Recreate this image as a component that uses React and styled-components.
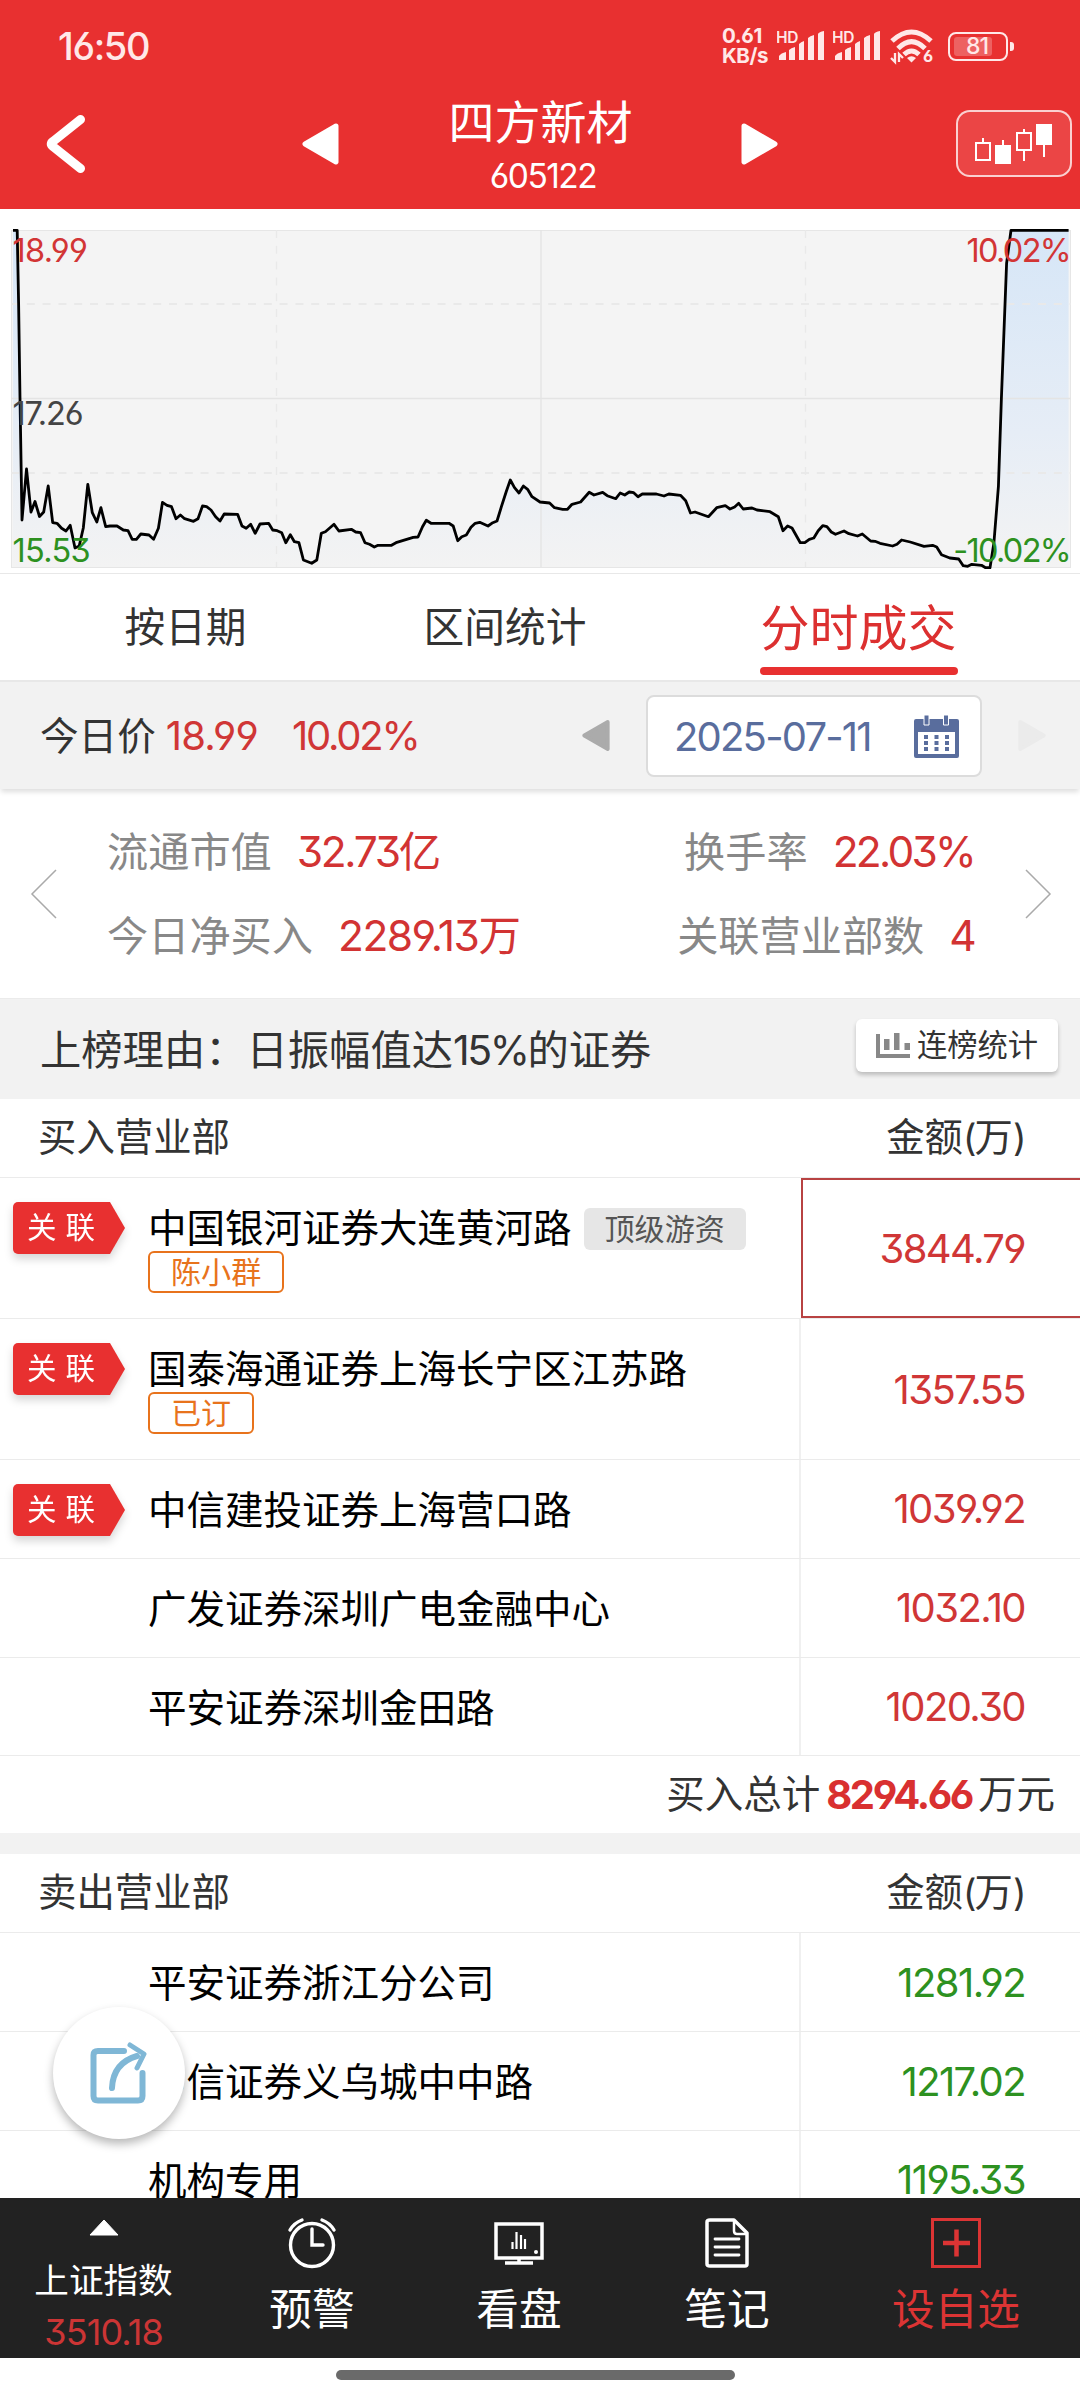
import styled, { createGlobalStyle, css } from "styled-components";

const GlobalStyle = createGlobalStyle`
  * {
    box-sizing: border-box;
  }

  body {
    margin: 0;
    background: #fff;
    font-family: "Inter", "Noto Sans CJK SC", sans-serif;
    font-feature-settings: "cv03", "cv04", "cv09";
  }

  svg {
    display: block;
    flex-shrink: 0;
  }
`;

const Page = styled.div`
  position: relative;
  display: flex;
  flex-direction: column;
  width: 1080px;
  height: 2400px;
  overflow: hidden;
  background: #fff;
  color: #333;
  white-space: nowrap;
`;

const Num = styled.span`
  letter-spacing: ${(props) => props.$spacing || "-0.04em"};
  font-size: ${(props) => props.$size || "40px"};
  font-weight: ${(props) => props.$weight || 400};
  color: ${(props) => props.$color || "inherit"};
`;

// 顶部
const Header = styled.header`
  height: 209px;
  background: #e83030;
  color: #fff;
`;

const StatusBar = styled.div`
  display: flex;
  align-items: center;
  height: 92px;
  padding: 0 66px 0 58px;
  color: #ffe8e8;
`;

const Clock = styled.div`
  flex: 1;
  font-size: 38px;
  font-weight: 500;
  letter-spacing: -0.035em;
`;

const NetSpeed = styled.div`
  width: 55px;
  font-size: 20.5px;
  line-height: 20px;
  font-weight: 700;
  letter-spacing: -0.02em;
`;

const SignalArea = styled.div`
  display: flex;
  width: 56px;
`;

const Wifi = styled.div`
  width: 59px;
`;

const Battery = styled.div`
  display: flex;
  align-items: center;
  gap: 2px;
`;

const BatteryBody = styled.div`
  display: flex;
  width: 60px;
  height: 29px;
  padding: 3px 4px;
  border: 2.5px solid #ffe8e8;
  border-radius: 8px;
`;

const BatteryFill = styled.div`
  display: flex;
  justify-content: center;
  width: 38px;
  padding-left: 8px;
  border-radius: 3px;
  background: rgba(255, 255, 255, 0.24);
  font-size: 23px;
  line-height: 18px;
  font-weight: 500;
  letter-spacing: -0.04em;
`;

const BatteryCap = styled.div`
  width: 4px;
  height: 9px;
  border-radius: 0 3px 3px 0;
  background: #ffe8e8;
`;

const TitleBar = styled.div`
  display: grid;
  grid-template-columns: 302px 103px 271px 280px 116px;
  align-items: center;
  height: 104px;
`;

const BackArea = styled.div`
  padding-left: 46px;
`;

const StockTitle = styled.div`
  display: flex;
  flex-direction: column;
  align-items: center;
`;

const StockName = styled.div`
  height: 62px;
  margin-top: -2px;
  font-size: 46px;
  line-height: 64px;
`;

const StockCode = styled.div`
  height: 44px;
  padding-left: 5px;
  font-size: 33.5px;
  line-height: 49px;
  letter-spacing: -0.045em;
`;

const NextArea = styled.div`
  padding-left: 65px;
`;

const KLineBtn = styled.div`
  display: flex;
  justify-content: center;
  align-items: center;
  height: 67px;
  margin-top: -1px;
  border: 2px solid rgba(255, 255, 255, 0.75);
  border-radius: 14px;
  background: #eb4545;
`;

// 分时图
const ChartArea = styled.div`
  height: 365px;
  padding-top: 1px;
  border-bottom: 1px solid #e8e8e8;
`;

const Tabs = styled.div`
  display: grid;
  grid-template-columns: 371px 268px 439px;
  height: 107px;
  border-bottom: 1px solid #e8e8e8;
`;

const Tab = styled.div`
  display: flex;
  justify-content: center;
  font-size: 40.7px;
  line-height: 108px;
`;

const ActiveTab = styled(Tab)`
  align-items: center;
  flex-direction: column;
  padding-top: 12px;
  color: #dc3030;
  font-size: 49px;
  line-height: 72px;
`;

const TabLine = styled.div`
  width: 198px;
  height: 8px;
  margin-top: 2px;
  border-radius: 4px;
  background: #e83030;
`;

const PriceBar = styled.div`
  position: relative;
  display: flex;
  align-items: center;
  height: 108px;
  padding-left: 40px;
  border-top: 1px solid #e8e8e8;
  background: #f2f2f2;
  box-shadow: 0 4px 5px -1px rgba(0, 0, 0, 0.13);
  font-size: 38.6px;
  line-height: 60px;
`;

const TodayPrice = styled.div`
  display: flex;
  width: 542px;
`;

const Price = styled(Num)`
  margin-left: 10px;
`;

const Rate = styled(Num)`
  margin-left: 34px;
`;

const DateBox = styled.div`
  display: flex;
  justify-content: space-between;
  align-items: center;
  width: 336px;
  height: 82px;
  margin: 0 36px;
  padding: 2px 21px 0 26px;
  border: 2px solid #dcdcdc;
  border-radius: 8px;
  background: #fff;
  color: #596d9d;
`;

const Summary = styled.div`
  display: flex;
  justify-content: space-between;
  align-items: center;
  height: 210px;
  padding: 0 26px 0 28px;
  border-bottom: 1px solid #ebebeb;
`;

const SummaryGrid = styled.div`
  display: grid;
  grid-template-columns: 1fr 1fr;
  flex: 1;
  padding: 1px 49px 0 48px;
  color: #888;
  font-size: 41.2px;
  line-height: 84px;
`;

const SummaryItem = styled.div`
  display: flex;
  justify-content: ${(props) => (props.$end ? "flex-end" : "flex-start")};
  gap: 25px;
`;

const SummaryValue = styled(Num)`
  font-size: 42.5px;
  color: #d23333;
`;

const ReasonBar = styled.div`
  display: flex;
  justify-content: space-between;
  align-items: center;
  height: 100px;
  padding: 0 22px 0 40px;
  background: #f2f2f2;
  font-size: 41.3px;
`;

const ReasonText = styled.div`
  margin-top: -5px;
`;

const StatBtn = styled.div`
  display: flex;
  justify-content: center;
  align-items: center;
  gap: 7px;
  width: 202px;
  height: 53px;
  margin-top: -8px;
  border-radius: 6px;
  background: #fff;
  box-shadow: 0 3px 4px rgba(0, 0, 0, 0.22);
  font-size: 30.3px;
  line-height: 47px;
`;

// 营业部列表
const TableHead = styled.div`
  display: flex;
  justify-content: space-between;
  height: 79px;
  padding: 0 55px 0 38px;
  border-bottom: 1px solid #ebebeb;
  font-size: 38.4px;
  line-height: 77px;
`;

const Row = styled.div`
  display: grid;
  grid-template-columns: 148px 651px 281px;
  height: ${(props) => (props.$tall ? "141px" : "98.8px")};
  border-bottom: 1px solid #ebebeb;
`;

const RelatedArea = styled.div`
  padding: 24px 0 0 13px;
  filter: drop-shadow(0 5px 4px rgba(0, 0, 0, 0.16));
`;

const RelatedBadge = styled.div`
  width: 112px;
  height: 52px;
  padding-left: 14px;
  border-radius: 5px 0 0 5px;
  background: #e83030;
  clip-path: polygon(0 0, 97px 0, 100% 50%, 97px 100%, 0 100%);
  color: #fff;
  font-size: 29.5px;
  line-height: 51px;
  letter-spacing: 9px;
`;

const DeptInfo = styled.div`
  display: flex;
  flex-direction: column;
  align-items: flex-start;
  padding-top: 29px;
`;

const DeptName = styled.div`
  display: flex;
  align-items: center;
  gap: 12px;
  height: 44px;
  color: #000;
  font-size: 38.5px;
  line-height: 42px;
`;

const NameText = styled.span`
  height: 44px;
`;

const tagStyle = css`
  height: 42px;
  border-radius: 6px;
  font-size: 30.1px;
`;

const GrayTag = styled.span`
  ${tagStyle}
  padding: 0 21px;
  background: #e6e6e6;
  color: #555;
  line-height: 42px;
`;

const OrangeTag = styled.span`
  ${tagStyle}
  padding: 0 21px;
  border: 2px solid #e8731c;
  color: #e8731c;
  line-height: 39px;
`;

const Amount = styled.div`
  display: flex;
  justify-content: flex-end;
  align-items: center;
  padding-right: 55px;
  border-left: 2px solid #f0f0f0;
  color: ${(props) => (props.$sell ? "#2d9120" : "#d03636")};

  ${(props) =>
    props.$selected &&
    css`
      margin: 0 0 0 2px;
      border: 2px solid #b84242;
      border-right: none;
    `}
`;

const TotalRow = styled.div`
  display: flex;
  justify-content: flex-end;
  gap: 6px;
  height: 77px;
  padding-right: 25px;
  font-size: 38.5px;
  line-height: 77px;
`;

const SectionGap = styled.div`
  height: 21px;
  background: #f2f2f2;
`;

const Content = styled.main`
  flex: 1;
  min-height: 0;
  overflow: hidden;
`;

const ShareBtn = styled.div`
  position: absolute;
  left: 53px;
  top: 2007px;
  display: flex;
  justify-content: center;
  align-items: center;
  width: 132px;
  height: 132px;
  border-radius: 50%;
  background: #fff;
  box-shadow: 0 5px 10px rgba(0, 0, 0, 0.28);
`;

// 底部导航
const BottomNav = styled.nav`
  display: grid;
  grid-template-columns: 208px 208px 206px 210px 248px;
  height: 160px;
  background: #222;
`;

const NavItem = styled.div`
  display: flex;
  flex-direction: column;
  align-items: center;
  padding-top: 19px;
  color: ${(props) => props.$color || "#fff"};
  font-size: 42.7px;
  line-height: 81px;
`;

const IndexItem = styled(NavItem)`
  padding: 21px 1px 0 0;
  line-height: 52px;
`;

const IndexName = styled.div`
  margin-top: 18px;
  font-size: 34.6px;
  line-height: 52px;
`;

const HomeArea = styled.div`
  display: flex;
  justify-content: center;
  height: 42px;
  padding-top: 12px;
`;

const HomeBar = styled.div`
  width: 399px;
  height: 10px;
  margin-right: 9px;
  border-radius: 5px;
  background: #6a6a6a;
`;

const linePoints =
  "13,20.3 17.2,20.3 18.6,93 20,188 22,310 26.5,259 31,302 35,291.5 39.5,306.5 43.7,302 48.2,276 52.7,312.7 57,313.3 61.6,318.3 66,321 70.2,315.3 75,338 79.2,336 83.3,318 87.8,274.3 92.3,302.7 96.8,312 100.9,297.7 105.7,316.7 110,316 117,316 123.3,320 128,320.7 132.2,329.3 136.4,329.3 140.8,324 149,325 153.6,329.3 158.4,318.3 162.5,292.3 167,295.3 171.5,296.7 176,308.7 180.4,305 184.6,308.7 193.5,311.3 198,308.7 202.5,296 206.6,296.7 211,300 215.6,306.7 220,311 224.2,304 237.6,304.3 242,316 246.2,318.3 250.7,314.3 255.2,323.3 260,314 268.6,313.3 272.7,320 277.2,320.7 281.7,322.7 285.8,332.7 290.3,324.7 294.4,331.7 298.9,332.7 303.4,350 311.7,353.3 316.8,350 321.3,323.3 325.4,321.7 334,314.3 338.9,321 351.3,319.3 355.7,322 360.6,322.7 365,332.7 369.5,334.3 374.3,337 378,335.3 391.5,335.3 396,332.7 413.2,327.3 418,327 422.5,316.7 426.3,310.3 431,313.3 449,313.3 453.2,316 457.7,330.7 461.8,326.7 466.3,325 471,317.3 475.2,313.3 479.7,312.3 488,316 492.8,312.7 497,311 501.4,296.7 506.2,281.7 510.3,270 514.5,277.7 519,283 523.4,276 527.6,279.3 532,286.7 540,292 549.6,293 554.5,297.7 562.7,299.3 567.5,299.3 572,294.3 580.6,292 589.2,282.3 594,285 602.7,282.3 607.2,285.7 615.8,288.7 620.2,283 624.7,285 629.2,282 633.7,282.7 638,286.7 642.3,284 656.4,284 664,286 668.8,284 680.5,285.3 685.7,290.7 690.5,303 695,302 708.4,306.7 716.7,297.7 725.3,295.7 730,299 734.6,297 738.7,293.3 743.2,299 752,298 757,300 770,301.7 778.3,306.7 783,320.7 787.6,316 792,318 800.3,332.7 804.8,332.7 809.3,329.3 813.8,328 818.2,320.7 822.7,315.7 826.9,316.7 831.3,322 835.5,324.3 844,321 848.9,323.7 857.5,326 862.3,324 870.6,331 875,331.3 880,333.3 892.6,336 897,334.3 901.6,330 910.2,332 924,336.3 932.6,335.3 936.7,337 941.5,344.7 949.8,348 958.7,349 963.2,355.7 967.7,356.3 971.8,354.3 981.5,355.3 985.6,357.7 990,357.7 993.9,333 998.4,276.7 1001.4,188.3 1006.6,53.3 1011,20.3 1068.6,20.3";

const buyList = [
  { name: "中国银河证券大连黄河路", amount: "3844.79", related: true, label: "顶级游资", tag: "陈小群", selected: true },
  { name: "国泰海通证券上海长宁区江苏路", amount: "1357.55", related: true, tag: "已订" },
  { name: "中信建投证券上海营口路", amount: "1039.92", related: true },
  { name: "广发证券深圳广电金融中心", amount: "1032.10" },
  { name: "平安证券深圳金田路", amount: "1020.30" },
];

const sellList = [
  { name: "平安证券浙江分公司", amount: "1281.92" },
  { name: "中信证券义乌城中中路", amount: "1217.02" },
  { name: "机构专用", amount: "1195.33" },
];

function Signal() {
  return (
    <SignalArea>
      <svg width="50" height="36" viewBox="0 0 50 36" fill="#ffe8e8">
        <text x="-1" y="15" fontSize="15.5" fontWeight="600" letterSpacing="-0.3">HD</text>
        <path d="M2 32v-4q2-3 7-4v8zM12 32V22q2-2 6-3v13zM22 32V16q2-2 5-3v19zM31 32V10q2-2 6-3v25zM41 32V6q1-2 6-3v29z" />
      </svg>
    </SignalArea>
  );
}

function Triangle({ right, width, height, color }) {
  return (
    <svg width={width} height={height} viewBox="0 0 37 42">
      <path
        d={right ? "M3 3L34 21L3 39Z" : "M34 3L3 21L34 39Z"}
        fill={color}
        stroke={color}
        strokeWidth="5"
        strokeLinejoin="round"
      />
    </svg>
  );
}

function Chart() {
  return (
    <ChartArea>
      <svg width="1080" height="362" viewBox="0 0 1080 362">
        <defs>
          <linearGradient id="fill" x1="0" y1="20" x2="0" y2="357" gradientUnits="userSpaceOnUse">
            <stop offset="0" stopColor="#d6e6f7" />
            <stop offset="0.6" stopColor="#e6edf6" />
            <stop offset="1" stopColor="#f3f3f3" />
          </linearGradient>
        </defs>
        <rect x="11.5" y="20.5" width="1059" height="337" fill="#f4f4f4" stroke="#e6e6e6" />
        <polygon points={`13,357 ${linePoints} 1068.6,357`} fill="url(#fill)" />
        <path d="M11 188.5H1071M541 20V357" stroke="#e4e4e4" strokeWidth="1.3" />
        <path d="M11 94H1071M11 263H1071" stroke="#e9e9e9" strokeWidth="2" strokeDasharray="8 7.8" />
        <path d="M276.5 20V357M805.5 20V357" stroke="#e9e9e9" strokeWidth="1.3" strokeDasharray="8 7.8" />
        <polyline points={linePoints} fill="none" stroke="#000" strokeWidth="2.8" strokeLinejoin="round" />
        <g fontSize="32.5" letterSpacing="-0.7">
          <text x="12.5" y="52" fill="#d23535">18.99</text>
          <text x="12.5" y="215" fill="#444" letterSpacing="-1.1">17.26</text>
          <text x="12.5" y="352" fill="#2d9120">15.53</text>
        </g>
        <g fontSize="32.5" letterSpacing="-1.7" textAnchor="end">
          <text x="1070" y="52" fill="#d23535">10.02%</text>
          <text x="1070" y="352" fill="#2d9120">-10.02%</text>
        </g>
      </svg>
    </ChartArea>
  );
}

function DeptHead({ title }) {
  return (
    <TableHead>
      <span>{title}</span>
      <span>
        金额<Num $size="37px" $spacing="-0.05em">(</Num>万<Num $size="37px">)</Num>
      </span>
    </TableHead>
  );
}

function DeptRow({ item, sell }) {
  return (
    <Row $tall={!!item.tag}>
      {item.related ? (
        <RelatedArea>
          <RelatedBadge>关联</RelatedBadge>
        </RelatedArea>
      ) : (
        <div />
      )}
      <DeptInfo>
        <DeptName>
          <NameText>{item.name}</NameText>
          {item.label && <GrayTag>{item.label}</GrayTag>}
        </DeptName>
        {item.tag && <OrangeTag>{item.tag}</OrangeTag>}
      </DeptInfo>
      <Amount $sell={sell} $selected={item.selected}>
        <Num>{item.amount}</Num>
      </Amount>
    </Row>
  );
}

export default function App() {
  return (
    <Page>
      <GlobalStyle />
      <Header>
        <StatusBar>
          <Clock>16:50</Clock>
          <NetSpeed>
            <div>0.61</div>
            <div>KB/s</div>
          </NetSpeed>
          <Signal />
          <Signal />
          <Wifi>
            <svg width="48" height="40" viewBox="0 -2 48 40" fill="none" stroke="#ffe8e8">
              <path d="M3 13Q22.500-5 42 13M9 20.500Q22.500 7 36 20.500M15 26.500Q22.500 19.500 30 26.500" strokeWidth="5" />
              <path d="M18 30Q22.500 26.500 27 30L22.500 34.500Z" fill="#ffe8e8" stroke="none" />
              <path d="M6 25v9l-4-4M10 34v-8l4 4" strokeWidth="2.300" />
              <text x="34" y="33.500" fontSize="16.500" fontWeight="700" fill="#ffe8e8" stroke="none">6</text>
            </svg>
          </Wifi>
          <Battery>
            <BatteryBody>
              <BatteryFill>81</BatteryFill>
            </BatteryBody>
            <BatteryCap />
          </Battery>
        </StatusBar>
        <TitleBar>
          <BackArea>
            <svg width="40" height="58" viewBox="0 0 40 58">
              <path d="M34.500 4.500L7 26.500Q3.500 29 7 31.500L34.500 53.500" fill="none" stroke="#fff" strokeWidth="9" strokeLinecap="round" />
            </svg>
          </BackArea>
          <Triangle width={37} height={42} color="#fff" />
          <StockTitle>
            <StockName>四方新材</StockName>
            <StockCode>605122</StockCode>
          </StockTitle>
          <NextArea>
            <Triangle right width={37} height={42} color="#fff" />
          </NextArea>
          <KLineBtn>
            <svg width="80" height="42" viewBox="0 0 80 42" stroke="#fff" strokeWidth="2">
              <path d="M2 20H16V37H2ZM9 20V15M43 10H57V27H43ZM50 10V6M50 27V38" fill="none" />
              <path d="M22 23H36V40H22ZM29 23V17M63 2H77V21H63ZM70 21V34" fill="#fff" />
            </svg>
          </KLineBtn>
        </TitleBar>
      </Header>

      <Content>
        <Chart />
        <Tabs>
          <Tab>按日期</Tab>
          <Tab>区间统计</Tab>
          <ActiveTab>
            分时成交
            <TabLine />
          </ActiveTab>
        </Tabs>
        <PriceBar>
          <TodayPrice>
            今日价
            <Price $color="#d03636" $spacing="-0.02em">18.99</Price>
            <Rate $color="#d03636" $spacing="-0.055em">10.02%</Rate>
          </TodayPrice>
          <Triangle width={28} height={37} color="#ababab" />
          <DateBox>
            <Num $spacing="-0.045em">2025-07-11</Num>
            <svg width="45" height="43" viewBox="0 0 45 43" fill="#596d9d">
              <path fillRule="evenodd" d="M2 4H43Q45 4 45 6V41Q45 43 43 43H2Q0 43 0 41V6Q0 4 2 4ZM4 17V39H41V17Z" />
              <path d="M10 0h5v10h-5zM29.500 0h5v10h-5z" stroke="#fff" strokeWidth="1" />
              <path d="M10 20h4v4h-4zM20.500 20h4v4h-4zM31 20h4v4h-4zM10 26h4v4h-4zM20.500 26h4v4h-4zM31 26h4v4h-4zM10 32h4v4h-4zM20.500 32h4v4h-4zM31 32h4v4h-4z" />
            </svg>
          </DateBox>
          <Triangle right width={28} height={37} color="#ebebeb" />
        </PriceBar>
        <Summary>
          <svg width="31" height="52" viewBox="0 0 31 52" fill="none" stroke="#aaa" strokeWidth="1.500">
            <path d="M28 2L4 26L28 50" />
          </svg>
          <SummaryGrid>
            <SummaryItem>
              流通市值
              <SummaryValue $spacing="-0.055em">32.73亿</SummaryValue>
            </SummaryItem>
            <SummaryItem $end>
              换手率
              <SummaryValue $spacing="-0.065em">22.03%</SummaryValue>
            </SummaryItem>
            <SummaryItem>
              今日净买入
              <SummaryValue $spacing="-0.035em">2289.13万</SummaryValue>
            </SummaryItem>
            <SummaryItem $end>
              关联营业部数
              <SummaryValue $spacing="-0.065em">4</SummaryValue>
            </SummaryItem>
          </SummaryGrid>
          <svg width="31" height="52" viewBox="0 0 31 52" fill="none" stroke="#aaa" strokeWidth="1.500">
            <path d="M3 2L27 26L3 50" />
          </svg>
        </Summary>
        <ReasonBar>
          <ReasonText>
            上榜理由：日振幅值达<Num $size="41px" $spacing="-0.06em">15%</Num>的证券
          </ReasonText>
          <StatBtn>
            <svg width="34" height="25" viewBox="0 0 34 25" fill="#888">
              <path d="M0 1h4v20h30v4H0zM8 6h5.500v11H8zM18 0h5.500v17H18zM28.500 10H34v7h-5.500z" />
            </svg>
            连榜统计
          </StatBtn>
        </ReasonBar>

        <DeptHead title="买入营业部" />
        {buyList.map((item) => (
          <DeptRow key={item.name} item={item} />
        ))}
        <TotalRow>
          <span>买入总计</span>
          <Num $color="#d93030" $weight={700} $spacing="-0.06em">8294.66</Num>
          <span>万元</span>
        </TotalRow>
        <SectionGap />
        <DeptHead title="卖出营业部" />
        {sellList.map((item) => (
          <DeptRow key={item.name} item={item} sell />
        ))}
      </Content>

      <ShareBtn>
        <svg width="58" height="62" viewBox="0 0 58 62" fill="none" stroke="#7fb7d6" strokeWidth="6">
          <path d="M34 9H8Q3.500 9 3.500 13V54Q3.500 58.500 8 58.500H48Q52.500 58.500 52.500 54V31" strokeLinecap="round" />
          <path d="M22 46Q23 21 47 14" strokeLinecap="round" />
          <path d="M40 3L54 12L47 26" strokeWidth="5" strokeLinecap="round" strokeLinejoin="round" />
        </svg>
      </ShareBtn>

      <BottomNav>
        <IndexItem>
          <svg width="30" height="17" viewBox="0 0 30 17">
            <path d="M15 1L29 16H1Z" fill="#fff" stroke="#fff" strokeLinejoin="round" />
          </svg>
          <IndexName>上证指数</IndexName>
          <Num $size="36px" $color="#cc3535" $spacing="-0.025em">3510.18</Num>
        </IndexItem>
        <NavItem>
          <svg width="50" height="52" viewBox="0 0 50 52" fill="none" stroke="#fff" strokeWidth="3.400" strokeLinecap="round">
            <circle cx="25" cy="28" r="21.500" />
            <path d="M25 12V28H36M3 13Q7 6 15 3M47 13Q43 6 35 3" />
          </svg>
          预警
        </NavItem>
        <NavItem>
          <svg width="50" height="52" viewBox="0 0 50 52" fill="none" stroke="#fff" strokeWidth="3.500">
            <path d="M2 7H48V41H2ZM11 46H39M25 41V46" />
            <path d="M18.500 25V32M22.500 15V32M27 18V32M31 22V32" strokeWidth="2.200" />
            <circle cx="42" cy="35" r="2" fill="#fff" stroke="none" />
          </svg>
          看盘
        </NavItem>
        <NavItem>
          <svg width="44" height="52" viewBox="0 0 44 52" fill="none" stroke="#fff" strokeWidth="3.500" strokeLinejoin="round">
            <path d="M5 3H29L42 16V47Q42 49 40 49H5Q2 49 2 47V5Q2 3 5 3Z" />
            <path d="M29 3V14Q29 17 32 17H42" strokeWidth="2.500" />
            <path d="M10 22H34M10 30H34M10 38H34" strokeWidth="2.800" strokeLinecap="round" />
          </svg>
          笔记
        </NavItem>
        <NavItem $color="#dc3434">
          <svg width="50" height="52" viewBox="0 0 50 52" fill="none" stroke="#dc3434">
            <path d="M1.500 2.500H48.500V49.500H1.500Z" strokeWidth="3" />
            <path d="M12 26H39M25.500 12.500V39.500" strokeWidth="4.500" />
          </svg>
          设自选
        </NavItem>
      </BottomNav>
      <HomeArea>
        <HomeBar />
      </HomeArea>
    </Page>
  );
}
